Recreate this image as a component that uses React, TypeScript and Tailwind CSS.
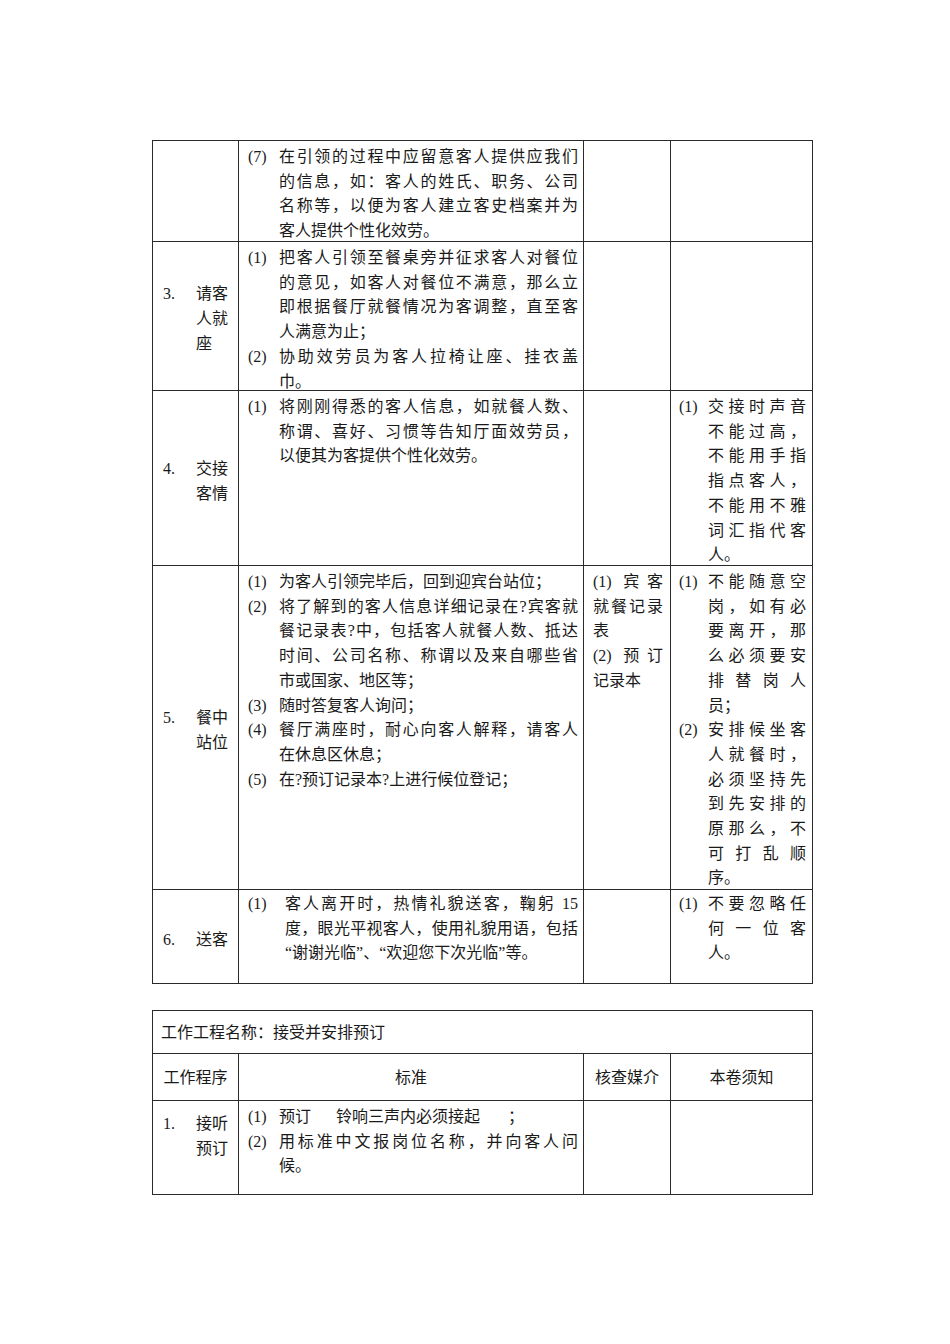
import React from "react";

type Para = { m?: string; lines: React.ReactNode[] };

function Lines({ lines }: { lines: React.ReactNode[] }) {
  return (
    <>
      {lines.map((l, j) => (
        <div
          key={j}
          className={
            j < lines.length - 1
              ? "text-justify [text-align-last:justify]"
              : "text-left"
          }
        >
          {l}
        </div>
      ))}
    </>
  );
}

function Paras({ paras, mw = "w-[31px]" }: { paras: Para[]; mw?: string }) {
  return (
    <div className="flex flex-col">
      {paras.map((p, i) => (
        <div key={i} className="flex">
          <div className={`${mw} shrink-0`}>{p.m}</div>
          <div className="min-w-0 flex-1">
            <Lines lines={p.lines} />
          </div>
        </div>
      ))}
    </div>
  );
}

function Step({ n, lines }: { n: string; lines: string[] }) {
  return (
    <div className="flex h-full items-center pl-[10px] pt-[7px]">
      <div className="flex">
        <div className="w-[33px] shrink-0">{n}</div>
        <div className="w-[36px]">
          {lines.map((l, i) => (
            <div key={i}>{l}</div>
          ))}
        </div>
      </div>
    </div>
  );
}

const cell = "border-r border-b border-[#2a2a2a]";
const c2 = `${cell} pl-[9px] pr-[5px] pt-[4px]`;
const c3 = `${cell} pl-[9px] pr-[7px] pt-[4px]`;
const c4 = `${cell} pl-[8px] pr-[6px] pt-[4px]`;

export default function App() {
  return (
    <div className="min-h-[1344px] w-[950px] bg-white pt-[140px] pl-[152px] font-['Liberation_Serif','Noto_Sans_CJK_SC',serif] text-[16px] leading-[24.7px] text-[#1a1a1a]">
      {/* Table 1 */}
      <div className="grid w-[661px] grid-cols-[86px_345px_87px_142px] grid-rows-[101px_149px_175px_324px_94px] border-l border-t border-[#2a2a2a]">
        {/* row 1 */}
        <div className={cell}></div>
        <div className={c2}>
          <Paras
            paras={[
              {
                m: "(7)",
                lines: [
                  "在引领的过程中应留意客人提供应我们",
                  "的信息，如：客人的姓氏、职务、公司",
                  "名称等，以便为客人建立客史档案并为",
                  "客人提供个性化效劳。",
                ],
              },
            ]}
          />
        </div>
        <div className={cell}></div>
        <div className={cell}></div>

        {/* row 2 */}
        <div className={cell}>
          <Step n="3." lines={["请客", "人就", "座"]} />
        </div>
        <div className={c2}>
          <Paras
            paras={[
              {
                m: "(1)",
                lines: [
                  "把客人引领至餐桌旁并征求客人对餐位",
                  "的意见，如客人对餐位不满意，那么立",
                  "即根据餐厅就餐情况为客调整，直至客",
                  "人满意为止；",
                ],
              },
              {
                m: "(2)",
                lines: ["协助效劳员为客人拉椅让座、挂衣盖", "巾。"],
              },
            ]}
          />
        </div>
        <div className={cell}></div>
        <div className={cell}></div>

        {/* row 3 */}
        <div className={cell}>
          <Step n="4." lines={["交接", "客情"]} />
        </div>
        <div className={c2}>
          <Paras
            paras={[
              {
                m: "(1)",
                lines: [
                  "将刚刚得悉的客人信息，如就餐人数、",
                  "称谓、喜好、习惯等告知厅面效劳员，",
                  "以便其为客提供个性化效劳。",
                ],
              },
            ]}
          />
        </div>
        <div className={cell}></div>
        <div className={c4}>
          <Paras
            mw="w-[29px]"
            paras={[
              {
                m: "(1)",
                lines: [
                  "交接时声音",
                  "不能过高，",
                  "不能用手指",
                  "指点客人，",
                  "不能用不雅",
                  "词汇指代客",
                  "人。",
                ],
              },
            ]}
          />
        </div>

        {/* row 4 */}
        <div className={cell}>
          <Step n="5." lines={["餐中", "站位"]} />
        </div>
        <div className={c2}>
          <Paras
            paras={[
              { m: "(1)", lines: ["为客人引领完毕后，回到迎宾台站位；"] },
              {
                m: "(2)",
                lines: [
                  "将了解到的客人信息详细记录在?宾客就",
                  "餐记录表?中，包括客人就餐人数、抵达",
                  "时间、公司名称、称谓以及来自哪些省",
                  "市或国家、地区等；",
                ],
              },
              { m: "(3)", lines: ["随时答复客人询问；"] },
              {
                m: "(4)",
                lines: ["餐厅满座时，耐心向客人解释，请客人", "在休息区休息；"],
              },
              { m: "(5)", lines: ["在?预订记录本?上进行候位登记；"] },
            ]}
          />
        </div>
        <div className={c3}>
          <Lines lines={["(1) 宾客", "就餐记录", "表"]} />
          <Lines lines={["(2) 预订", "记录本"]} />
        </div>
        <div className={c4}>
          <Paras
            mw="w-[29px]"
            paras={[
              {
                m: "(1)",
                lines: [
                  "不能随意空",
                  "岗，如有必",
                  "要离开，那",
                  "么必须要安",
                  "排替岗人",
                  "员；",
                ],
              },
              {
                m: "(2)",
                lines: [
                  "安排候坐客",
                  "人就餐时，",
                  "必须坚持先",
                  "到先安排的",
                  "原那么，不",
                  "可打乱顺",
                  "序。",
                ],
              },
            ]}
          />
        </div>

        {/* row 5 */}
        <div className={cell}>
          <Step n="6." lines={["送客"]} />
        </div>
        <div className={`${cell} pl-[9px] pr-[5px] pt-[2px]`}>
          <Paras
            mw="w-[37px]"
            paras={[
              {
                m: "(1)",
                lines: [
                  "客人离开时，热情礼貌送客，鞠躬 15",
                  "度，眼光平视客人，使用礼貌用语，包括",
                  "“谢谢光临”、“欢迎您下次光临”等。",
                ],
              },
            ]}
          />
        </div>
        <div className={cell}></div>
        <div className={`${cell} pl-[8px] pr-[6px] pt-[2px]`}>
          <Paras
            mw="w-[29px]"
            paras={[{ m: "(1)", lines: ["不要忽略任", "何一位客", "人。"] }]}
          />
        </div>
      </div>

      {/* Table 2 */}
      <div className="mt-[26px] grid w-[661px] grid-cols-[86px_345px_87px_142px] grid-rows-[43px_47px_94px] border-l border-t border-[#2a2a2a]">
        <div className={`${cell} col-span-4 flex items-center pl-[8px] pt-[3px]`}>
          工作工程名称：接受并安排预订
        </div>
        <div className={`${cell} flex items-center justify-center pt-[3px]`}>工作程序</div>
        <div className={`${cell} flex items-center justify-center pt-[3px]`}>标准</div>
        <div className={`${cell} flex items-center justify-center pt-[3px]`}>核查媒介</div>
        <div className={`${cell} flex items-center justify-center pt-[3px]`}>本卷须知</div>

        <div className={`${cell} pl-[10px] pt-[11px]`}>
          <div className="flex">
            <div className="w-[33px] shrink-0">1.</div>
            <div className="w-[36px]">
              <div>接听</div>
              <div>预订</div>
            </div>
          </div>
        </div>
        <div className={c2}>
          <Paras
            paras={[
              {
                m: "(1)",
                lines: [
                  <span key="a">
                    预订<span className="ml-[25px]">铃响三声内必须接起</span>
                    <span className="ml-[28px]">；</span>
                  </span>,
                ],
              },
              {
                m: "(2)",
                lines: ["用标准中文报岗位名称，并向客人问", "候。"],
              },
            ]}
          />
        </div>
        <div className={cell}></div>
        <div className={cell}></div>
      </div>
    </div>
  );
}
